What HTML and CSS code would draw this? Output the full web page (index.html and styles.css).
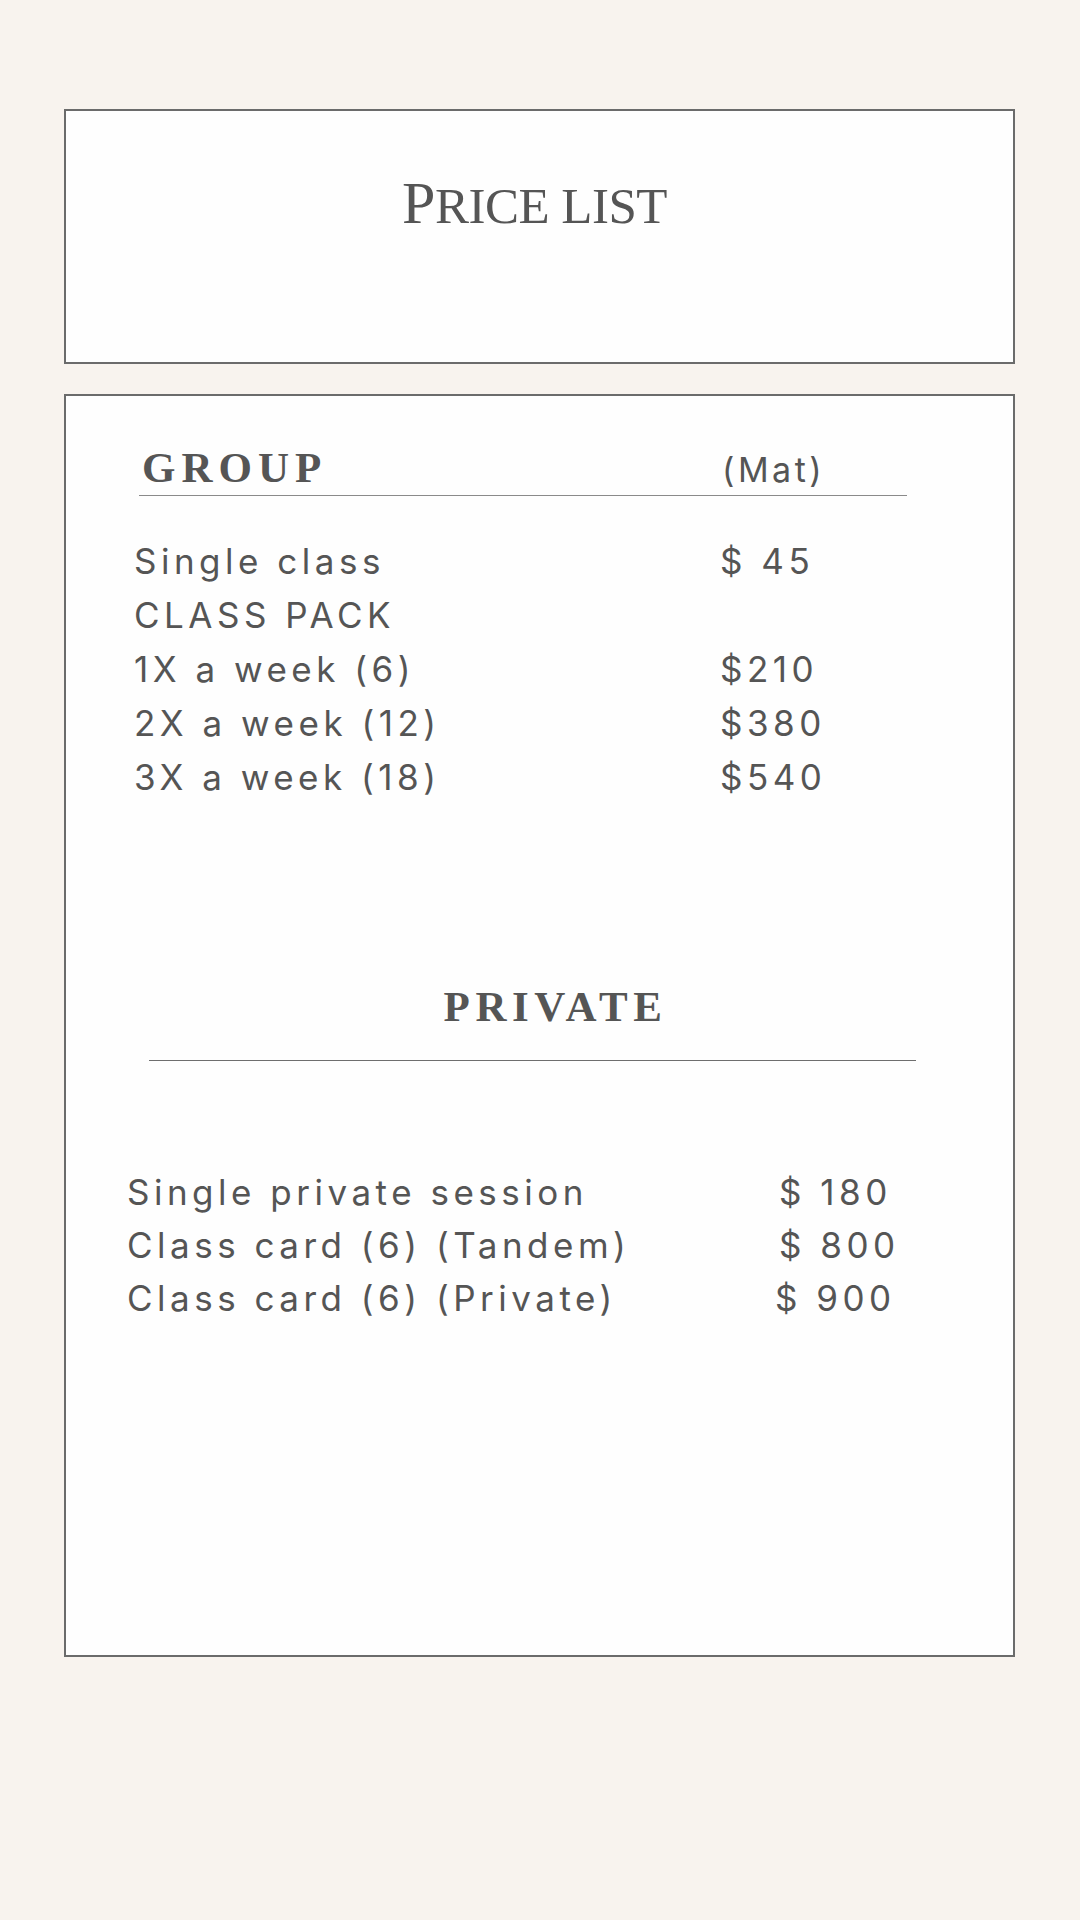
FILE: index.html
```html
<!DOCTYPE html>
<html lang="en">
<head>
  <meta charset="UTF-8">
  <title>Price list</title>
  <meta name="viewport" content="width=device-width, initial-scale=1.0">
  <link rel="stylesheet" href="styles.css">
</head>
<body>
  <header class="title-card">
    <h1 class="title"><span class="title-initial">P</span><span class="title-rest">rice list</span></h1>
  </header>

  <main class="price-card">
    <section class="group">
      <div class="group-head">
        <h2 class="section-title">GROUP</h2>
        <span class="group-note">(Mat)</span>
      </div>
      <div class="rows group-rows">
        <span>Single class</span><span>$ 45</span>
        <span>CLASS PACK</span><span></span>
        <span>1X a week (6)</span><span>$210</span>
        <span>2X a week (12)</span><span>$380</span>
        <span>3X a week (18)</span><span>$540</span>
      </div>
    </section>

    <section class="private">
      <h2 class="section-title private-title">PRIVATE</h2>
      <div class="rows private-rows">
        <span>Single private session</span><span class="p1">$ 180</span>
        <span>Class card (6) (Tandem)</span><span class="p1">$ 800</span>
        <span>Class card (6) (Private)</span><span>$ 900</span>
      </div>
    </section>
  </main>
</body>
</html>
```

FILE: styles.css
```css
body {
  margin: 0;
  padding: 109px 65px 0 64px;
  background-color: #f8f3ee;
  color: #555555;
  min-height: 1920px;
  box-sizing: border-box;
}

.title-card,
.price-card {
  background: #fefefe;
  border: 2px solid #6b6b6b;
  box-sizing: border-box;
}

.title-card {
  height: 255px;
  padding: 62px 10px 0 0;
  text-align: center;
}

.title {
  margin: 0;
  font-family: "Liberation Serif", serif;
  font-weight: normal;
  line-height: 1;
  color: #555555;
  font-size: 60px;
  letter-spacing: -0.5px;
}

.title-rest {
  font-size: 51px;
  text-transform: uppercase;
}

.price-card {
  margin-top: 30px;
  height: 1263px;
  padding-top: 50px;
}

.section-title {
  margin: 0;
  font-family: "Liberation Serif", serif;
  font-weight: bold;
  font-size: 43px;
  line-height: 1;
  letter-spacing: 0.14em;
  color: #555555;
}

.group-head {
  display: flex;
  align-items: baseline;
  margin-left: 73px;
  width: 768px;
  padding-bottom: 5px;
  border-bottom: 1.5px solid #8a8a8a;
}

.group-head .section-title {
  width: 580px;
  padding-left: 3px;
}

.group-note,
.rows {
  font-family: Inter, "Noto Sans", sans-serif;
  font-size: 35px;
  letter-spacing: 4.5px;
  color: #555555;
}

.group-note {
  font-size: 34px;
  letter-spacing: 3.5px;
}

.rows {
  display: grid;
  line-height: 54px;
}

.group-rows {
  margin-top: 38px;
  margin-left: 68px;
  grid-template-columns: 586px auto;
}

.private-title {
  margin: 181px 0 0 83px;
  width: 767px;
  padding: 0 0 32px 46px;
  box-sizing: border-box;
  text-align: center;
  letter-spacing: 0.13em;
  border-bottom: 1.5px solid #6e6e6e;
}

.private-rows {
  margin-top: 105px;
  margin-left: 61px;
  line-height: 53px;
  grid-template-columns: 648px auto;
}

.private-rows .p1 {
  padding-left: 4px;
}
```
